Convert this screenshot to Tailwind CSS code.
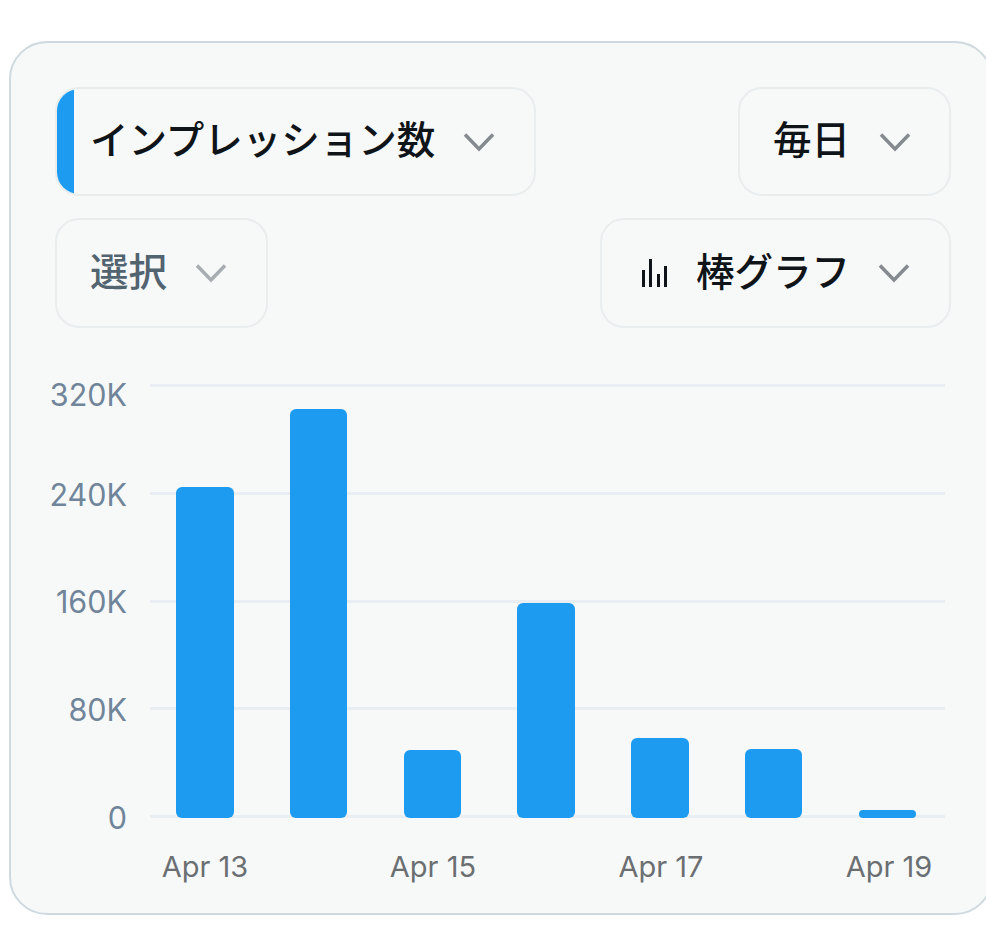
<!DOCTYPE html>
<html lang="ja">
<head>
  <meta charset="UTF-8">
  <meta name="viewport" content="width=device-width, initial-scale=1.0">
  <title>インプレッション数</title>
  <script src="https://cdn.jsdelivr.net/npm/@tailwindcss/browser@4"></script>
</head>
<body class="bg-white h-[943px] w-[986px] overflow-hidden font-['Inter','Noto_Sans_CJK_JP',sans-serif]">
  <div class="pt-[41px] pl-[9px]">
    <div class="w-[984px] h-[874px] bg-[#f7f9f9] border-2 border-[#cfd9de] rounded-[38px] pt-[44px] pl-[44px] pr-[40px]">

      <!-- row 1 -->
      <div class="flex justify-between">
        <div class="relative w-[481px] h-[109px] border-2 border-[#e9eded] rounded-[24px] overflow-hidden flex items-center pl-[33px]">
          <div class="absolute left-0 top-0 bottom-0 w-[17px] bg-[#1d9bf0]"></div>
          <span class="mb-[2px] text-[38.5px] font-medium text-[#0f1419] leading-none">インプレッション数</span>
          <svg class="ml-[27px] w-[34px] h-[20px]" viewBox="0 0 34 20" fill="none" stroke="#858a8e" stroke-width="3.5"><path d="M3 2.5 L17 17 L31 2.5"/></svg>
        </div>
        <div class="w-[213px] h-[109px] border-2 border-[#e9eded] rounded-[24px] flex items-center pl-[33px]">
          <span class="mb-[2px] text-[38.5px] font-medium text-[#0f1419] leading-none">毎日</span>
          <svg class="ml-[28px] w-[34px] h-[20px]" viewBox="0 0 34 20" fill="none" stroke="#858a8e" stroke-width="3.5"><path d="M3 2.5 L17 17 L31 2.5"/></svg>
        </div>
      </div>

      <!-- row 2 -->
      <div class="flex justify-between mt-[22px]">
        <div class="w-[213px] h-[110px] border-2 border-[#e9eded] rounded-[24px] flex items-center pl-[33px]">
          <span class="mb-[2px] text-[38.5px] font-medium text-[#536471] leading-none">選択</span>
          <svg class="ml-[27px] w-[34px] h-[20px]" viewBox="0 0 34 20" fill="none" stroke="#a7adb1" stroke-width="3.5"><path d="M3 2.5 L17 17 L31 2.5"/></svg>
        </div>
        <div class="w-[351px] h-[110px] border-2 border-[#e9eded] rounded-[24px] flex items-center pl-[39px]">
          <svg class="w-[28px] h-[30px]" viewBox="0 0 28 30" fill="#0f1419"><rect x="1" y="12" width="3" height="17"/><rect x="8" y="1" width="3" height="28"/><rect x="16" y="16" width="3" height="13"/><rect x="23" y="8" width="3" height="21"/></svg>
          <span class="mb-[2px] ml-[27px] text-[38.5px] font-medium text-[#0f1419] leading-none">棒グラフ</span>
          <svg class="ml-[27px] w-[34px] h-[20px]" viewBox="0 0 34 20" fill="none" stroke="#858a8e" stroke-width="3.5"><path d="M3 2.5 L17 17 L31 2.5"/></svg>
        </div>
      </div>

      <!-- chart -->
      <div class="flex mt-[56px]">
        <div class="w-[72px] -mt-[6px] flex flex-col items-end text-[30.5px] leading-[34px] text-[#71859a] shrink-0">
          <span class="h-[34px]">320K</span>
          <span class="h-[34px] mt-[66px]">240K</span>
          <span class="h-[34px] mt-[73px]">160K</span>
          <span class="h-[34px] mt-[74px]">80K</span>
          <span class="h-[34px] mt-[74px]">0</span>
        </div>
        <div class="relative ml-[23px] w-[795px] h-[434px]">
          <div class="absolute inset-0 flex flex-col justify-between">
            <div class="h-[3px] bg-[#e8eef1]"></div>
            <div class="h-[3px] bg-[#e8eef1]"></div>
            <div class="h-[3px] bg-[#e8eef1]"></div>
            <div class="h-[3px] bg-[#e8eef1]"></div>
            <div class="h-[3px] bg-[#e8eef1]"></div>
          </div>
          <div class="absolute inset-0 flex items-end pl-[26px] gap-[56.3px]">
            <div class="w-[57.5px] h-[331px] bg-[#1d9bf0] rounded-[6px] shrink-0"></div>
            <div class="w-[57.5px] h-[409px] bg-[#1d9bf0] rounded-[6px] shrink-0"></div>
            <div class="w-[57.5px] h-[68px] bg-[#1d9bf0] rounded-[6px] shrink-0"></div>
            <div class="w-[57.5px] h-[215px] bg-[#1d9bf0] rounded-[6px] shrink-0"></div>
            <div class="w-[57.5px] h-[80px] bg-[#1d9bf0] rounded-[6px] shrink-0"></div>
            <div class="w-[57.5px] h-[69px] bg-[#1d9bf0] rounded-[6px] shrink-0"></div>
            <div class="w-[57.5px] h-[8px] bg-[#1d9bf0] rounded-[4px] shrink-0"></div>
          </div>
        </div>
      </div>

      <!-- x axis -->
      <div class="flex text-[29px] leading-[34px] text-[#6b6f72] mt-[15px] pl-[36px]">
        <span class="w-[228px] shrink-0 text-center">Apr 13</span>
        <span class="w-[228px] shrink-0 text-center">Apr 15</span>
        <span class="w-[228px] shrink-0 text-center">Apr 17</span>
        <span class="w-[228px] shrink-0 text-center">Apr 19</span>
      </div>
    </div>
  </div>
</body>
</html>
